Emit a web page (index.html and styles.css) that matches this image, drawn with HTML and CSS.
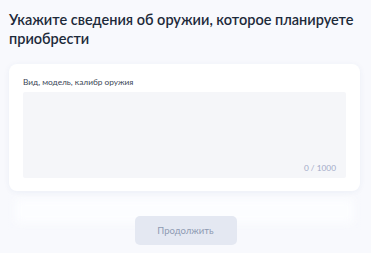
FILE: index.html
```html
<!DOCTYPE html>
<html lang="ru">
<head>
    <meta charset="UTF-8">
    <title>Сведения об оружии</title>
    <link rel="stylesheet" href="styles.css">
</head>
<body>
    <div class="pagina">
        <h1 class="titulo">Укажите сведения об оружии, которое планируете приобрести</h1>

        <div class="tarjeta">
            <label class="etiqueta" for="arma">Вид, модель, калибр оружия</label>
            <div class="campo">
                <textarea id="arma" maxlength="1000"></textarea>
                <span class="contador">0 / 1000</span>
            </div>
        </div>

        <div class="pie">
            <button class="boton" disabled>Продолжить</button>
        </div>
    </div>
</body>
</html>
```

FILE: styles.css
```css
body {
    margin: 0;
    font-family: Lato, "Open Sans", sans-serif;
    background-color: #f8f9fd;
    color: #0b1f33;
}
.pagina {
    padding: 10px 9px 0 9px;
}
.titulo {
    margin: 0 0 16px 0;
    font-size: 14.5px;
    line-height: 19px;
    font-weight: 600;
    color: #1d2a3a;
}
.tarjeta {
    position: relative;
    z-index: 1;
    background-color: white;
    border-radius: 8px;
    box-shadow: 0 1px 6px rgba(30,60,140,0.06);
    padding: 13px 14px 13px 14px;
    margin-right: 2px;
}
.etiqueta {
    display: block;
    font-size: 8.3px;
    line-height: 10px;
    color: #3b4656;
    margin-bottom: 5px;
}
.campo {
    position: relative;
    height: 86px;
    background-color: #f5f6f9;
    border-radius: 2px;
}
.campo textarea {
    width: 100%;
    height: 100%;
    box-sizing: border-box;
    border: none;
    background: transparent;
    resize: none;
    outline: none;
}
.contador {
    position: absolute;
    right: 10px;
    bottom: 5px;
    font-size: 8.3px;
    color: #a3abc8;
}
.pie {
    position: relative;
    display: flex;
    justify-content: center;
    padding: 25px 0 9px 0;
}
.pie::before {
    content: "";
    position: absolute;
    left: 6px;
    right: 8px;
    top: 8px;
    height: 24px;
    background-color: #fcfdff;
    filter: blur(5px);
}
.boton {
    position: relative;
    width: 102px;
    height: 29px;
    border: none;
    border-radius: 5px;
    background-color: #e4e8f2;
    color: #8f9bb3;
    font-family: Lato, sans-serif;
    font-size: 9.5px;
}
```
